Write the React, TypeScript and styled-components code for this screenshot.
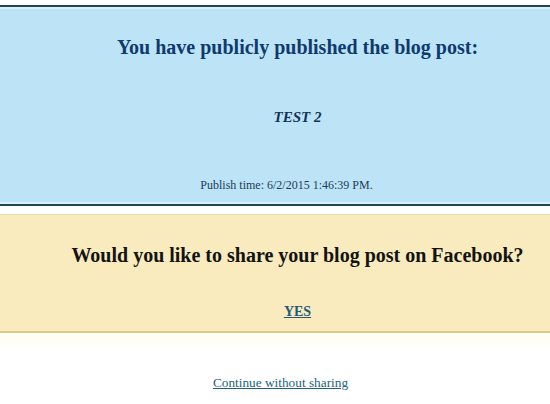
import React from "react";
import styled, { createGlobalStyle } from "styled-components";

const Global = createGlobalStyle`
  html, body { margin: 0; padding: 0; background: #ffffff; }
  body { font-family: "Liberation Serif", "Times New Roman", serif; }
`;

const Page = styled.div`
  width: 550px;
  height: 404px;
  padding-top: 5px;
  box-sizing: border-box;
  display: flex;
  flex-direction: column;
  background: linear-gradient(#ffffff 0, #ffffff 330px, #fdfdf1 332px, #fefef7 344px, #ffffff 350px);
  overflow: hidden;
`;

const Published = styled.section`
  background: #bde4f6;
  border-top: 2px solid #1f4753;
  border-bottom: 2px solid #1f4753;
  box-shadow: inset 0 2px 0 #d8eef8, inset 0 -2px 0 #d8eef8;
  padding: 29px 0 12px 45px;
  display: flex;
  flex-direction: column;
  align-items: center;
  color: #0f3a6e;
`;

const Heading = styled.h1<{ $dark?: boolean }>`
  margin: 0;
  font-size: 20px;
  font-weight: bold;
  line-height: 23px;
  color: ${(p) => (p.$dark ? "#131313" : "#0f3a6e")};
  white-space: nowrap;
`;

const PostTitle = styled.div`
  margin-top: 49px;
  font-size: 15px;
  font-weight: bold;
  font-style: italic;
  line-height: 18px;
  color: #12335a;
`;

const PublishTime = styled.div`
  margin-top: 52px;
  margin-left: -45px;
  padding-left: 23px;
  font-size: 12px;
  line-height: 14px;
  color: #1c3a5c;
`;

const Share = styled.section`
  margin-top: 8px;
  background: #f9ebbd;
  border-top: 1px solid #eadca6;
  border-bottom: 2px solid #dcc889;
  padding: 29px 0 11px 45px;
  display: flex;
  flex-direction: column;
  align-items: center;
`;

const YesLink = styled.a`
  margin-top: 37px;
  font-size: 14px;
  font-weight: bold;
  line-height: 16px;
  color: #1b5a78;
  text-decoration: underline;
  cursor: pointer;
`;

const Footer = styled.div`
  padding: 42px 0 0 11px;
  display: flex;
  justify-content: center;
`;

const ContinueLink = styled.a`
  font-size: 13.3px;
  line-height: 15px;
  color: #1f6280;
  text-decoration: underline;
  cursor: pointer;
`;

export default function App() {
  return (
    <>
      <Global />
      <Page>
        <Published>
          <Heading>You have publicly published the blog post:</Heading>
          <PostTitle>TEST 2</PostTitle>
          <PublishTime>Publish time: 6/2/2015 1:46:39 PM.</PublishTime>
        </Published>
        <Share>
          <Heading $dark>Would you like to share your blog post on Facebook?</Heading>
          <YesLink>YES</YesLink>
        </Share>
        <Footer>
          <ContinueLink>Continue without sharing</ContinueLink>
        </Footer>
      </Page>
    </>
  );
}
